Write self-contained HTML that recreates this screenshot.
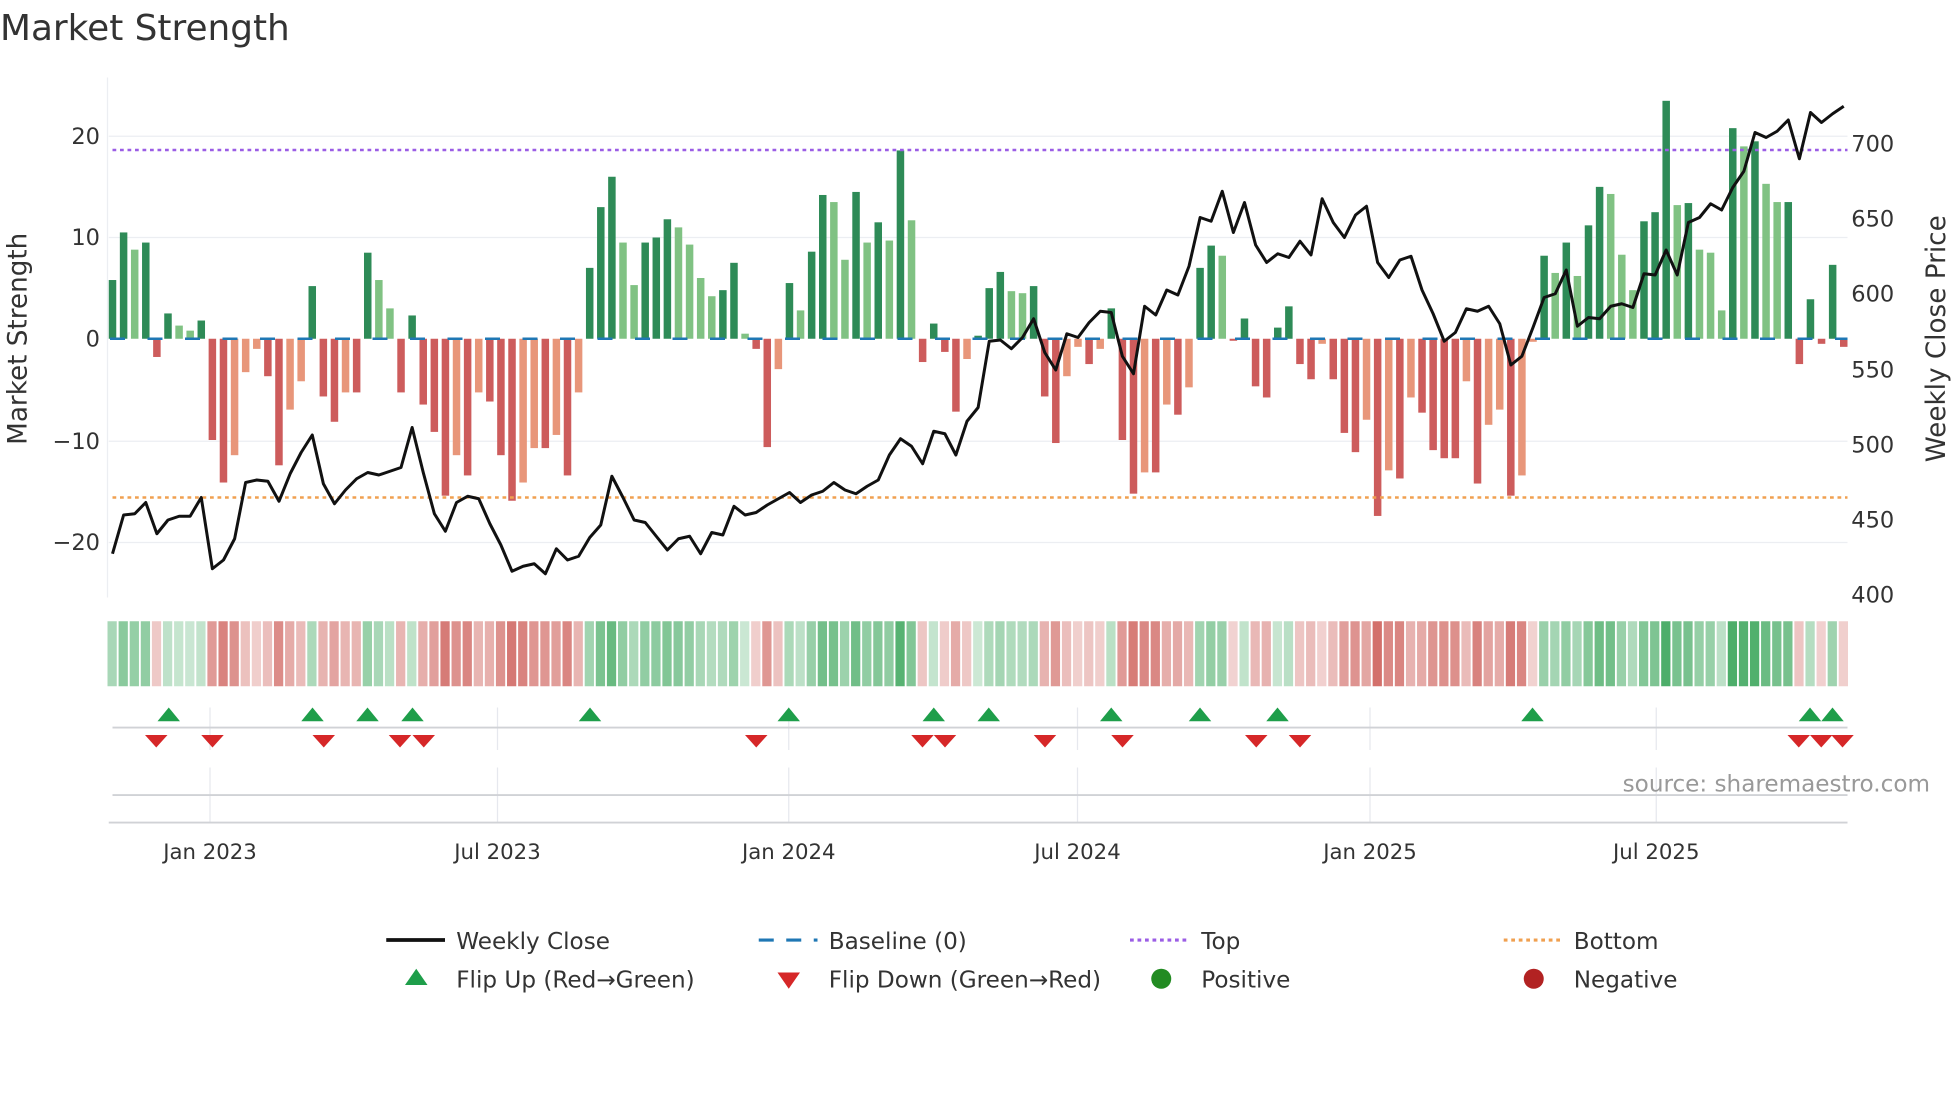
<!DOCTYPE html>
<html><head><meta charset="utf-8"><style>
html,body{margin:0;padding:0;background:#fff;width:1960px;height:1102px;overflow:hidden}
svg{display:block}
text{font-family:"DejaVu Sans","Liberation Sans",sans-serif;fill:#333}
</style></head><body>
<svg id="s" width="1960" height="1102" viewBox="0 0 1568 881.6" xmlns="http://www.w3.org/2000/svg">
<rect width="1568" height="882" fill="#fff"/>
<text x="0" y="32" font-size="28.7">Market Strength</text>
<g id="grid"></g>
<g id="bars"></g>
<g id="heat"></g>
<g id="marks"></g>
<g id="axes"></g>
</svg>
<script>
const NS="http://www.w3.org/2000/svg";
function el(p,t,a,txt){const e=document.createElementNS(NS,t);for(const k in a)e.setAttribute(k,a[k]);if(txt!==undefined)e.textContent=txt;document.getElementById(p).appendChild(e);return e;}
const v=[5.8,10.5,8.8,9.5,-1.8,2.5,1.3,0.8,1.8,-10,-14.2,-11.5,-3.3,-1,-3.7,-12.5,-7,-4.2,5.2,-5.7,-8.2,-5.3,-5.3,8.5,5.8,3,-5.3,2.3,-6.5,-9.2,-15.5,-11.5,-13.5,-5.3,-6.2,-11.5,-16,-14.2,-10.8,-10.8,-9.5,-13.5,-5.3,7,13,16,9.5,5.3,9.5,10,11.8,11,9.3,6,4.2,4.8,7.5,0.5,-1,-10.7,-3,5.5,2.8,8.6,14.2,13.5,7.8,14.5,9.5,11.5,9.7,18.6,11.7,-2.3,1.5,-1.3,-7.2,-2,0.3,5,6.6,4.7,4.5,5.2,-5.7,-10.3,-3.7,-0.8,-2.5,-1,3,-10,-15.3,-13.2,-13.2,-6.5,-7.5,-4.8,7,9.2,8.2,-0.2,2,-4.7,-5.8,1.1,3.2,-2.5,-4,-0.5,-4,-9.3,-11.2,-8,-17.5,-13,-13.8,-5.8,-7.3,-11,-11.8,-11.8,-4.2,-14.3,-8.5,-7,-15.5,-13.5,-0.3,8.2,6.5,9.5,6.2,11.2,15,14.3,8.3,4.8,11.6,12.5,23.5,13.2,13.4,8.8,8.5,2.8,20.8,19,19.5,15.3,13.5,13.5,-2.5,3.9,-0.5,7.3,-0.8];
const py=[443,412,411,402,427,416,413,413,398,455,448,431,386,384,385,401,379,362,348,387,403,392,383,378,380,377,374,342,378,411,425,402,397,399,419,436,457,453,451,459,439,448,445,430,420,381,398,416,418,429,440,431,429,443,426,428,405,412,410,404,399,394,402,396,393,386,392,395,389,384,364,351,357,371,345,347,364,337,326,273,272,279,270,255,282,296,267,270,258,249,250,285,299,245,252,232,236,213,174,177,153,186,162,196,210,203,206,193,204,159,178,190,172,165,210,222,208,205,232,251,273,266,247,249,245,259,292,285,262,238,235,216,261,254,255,245,243,246,219,220,200,220,178,174,163,168,150,137,106,110,105,96,127,90,98,91,85];
const N=v.length, x0=90, dx=(1475-90)/(N-1);
const Y=u=>271-u*8.1;
[[109],[190],[353],[434]].forEach(a=>el('grid','line',{x1:87,x2:1478,y1:a[0],y2:a[0],stroke:'#eceef2','stroke-width':1}));
el('grid','line',{x1:86,x2:86,y1:62,y2:478,stroke:'#eceef2'});
[168,398,631,862,1096,1325].forEach(x=>{el('grid','line',{x1:x,x2:x,y1:566,y2:600,stroke:'#e6e8ee'});el('grid','line',{x1:x,x2:x,y1:614,y2:658,stroke:'#e6e8ee'});});
for(let i=0;i<N;i++){const x=x0+i*dx,val=v[i];const p=i>0?v[i-1]:0;const same=p*val>0;const light=same&&Math.abs(val)<Math.abs(p);
let c=val>=0?(light?'#80c283':'#2e8b57'):(light?'#e8967a':'#cd5c5c');
el('bars','rect',{x:x-3,y:val>=0?Y(val):271,width:6,height:Math.abs(val)*8.1,fill:c});}
el('bars','line',{x1:88,x2:1478,y1:271,y2:271,stroke:'#1f77b4','stroke-width':2,'stroke-dasharray':'12,18'});
el('bars','line',{x1:90,x2:1478,y1:120,y2:120,stroke:'#9b5de5','stroke-width':2,'stroke-dasharray':'3,3'});
el('bars','line',{x1:90,x2:1478,y1:398,y2:398,stroke:'#f0a050','stroke-width':2,'stroke-dasharray':'3,3'});
let d='';for(let i=0;i<N;i++)d+=(i?'L':'M')+(x0+i*dx).toFixed(1)+','+py[i];
el('bars','path',{d:d,fill:'none',stroke:'#111','stroke-width':2.4,'stroke-linejoin':'round'});
for(let i=0;i<N;i++){const x=x0+i*dx,val=v[i];const a=0.25+0.65*Math.min(Math.abs(val)/20,1);
el('heat','rect',{x:x-4,y:497,width:7.4,height:52,fill:val>=0?'#3aa55a':'#c9504a','fill-opacity':a});}
el('marks','line',{x1:90,x2:1478,y1:582,y2:582,stroke:'#d0d2d6','stroke-width':1.5});
el('marks','line',{x1:90,x2:1478,y1:636,y2:636,stroke:'#d0d2d6','stroke-width':1.5});
el('marks','line',{x1:87,x2:1478,y1:658,y2:658,stroke:'#d0d2d6','stroke-width':1.5});
[135,250,294,330,472,631,747,791,889,960,1022,1226,1448,1466].forEach(x=>el('marks','path',{d:`M${x-9},577L${x},566L${x+9},577Z`,fill:'#1e9e4a'}));
[125,170,259,320,339,605,738,756,836,898,1005,1040,1439,1457,1474].forEach(x=>el('marks','path',{d:`M${x-9},588L${x},598L${x+9},588Z`,fill:'#d62728'}));
[['20',115],['10',196],['0',277],['−10',359],['−20',440]].forEach(a=>el('axes','text',{x:80,y:a[1],'font-size':18,'text-anchor':'end'},a[0]));
[['700',121],['650',181],['600',241],['550',302],['500',362],['450',422],['400',482]].forEach(a=>el('axes','text',{x:1481,y:a[1],'font-size':18},a[0]));
el('axes','text',{x:0,y:0,'font-size':21,'text-anchor':'middle',transform:'translate(21,271) rotate(-90)'},'Market Strength');
el('axes','text',{x:0,y:0,'font-size':21,'text-anchor':'middle',transform:'translate(1556,271) rotate(-90)'},'Weekly Close Price');
[['Jan 2023',168],['Jul 2023',398],['Jan 2024',631],['Jul 2024',862],['Jan 2025',1096],['Jul 2025',1325]].forEach(a=>{el('axes','text',{x:a[1],y:687,'font-size':17,'text-anchor':'middle'},a[0]);});
el('axes','text',{x:1544,y:633,'font-size':18.5,'text-anchor':'end',style:'fill:#999'},'source: sharemaestro.com');
const LF=18.5;
el('axes','line',{x1:309,x2:356,y1:752,y2:752,stroke:'#111','stroke-width':3});
el('axes','text',{x:365,y:759,'font-size':LF},'Weekly Close');
el('axes','line',{x1:607,x2:654,y1:752,y2:752,stroke:'#1f77b4','stroke-width':2.5,'stroke-dasharray':'12,10'});
el('axes','text',{x:663,y:759,'font-size':LF},'Baseline (0)');
el('axes','line',{x1:904,x2:950,y1:752,y2:752,stroke:'#9b5de5','stroke-width':2.5,'stroke-dasharray':'3,3'});
el('axes','text',{x:961,y:759,'font-size':LF},'Top');
el('axes','line',{x1:1203,x2:1249,y1:752,y2:752,stroke:'#f0a050','stroke-width':2.5,'stroke-dasharray':'3,3'});
el('axes','text',{x:1259,y:759,'font-size':LF},'Bottom');
el('axes','path',{d:'M324,788L333,775L342,788Z',fill:'#1e9e4a'});
el('axes','text',{x:365,y:790,'font-size':LF},'Flip Up (Red→Green)');
el('axes','path',{d:'M622,778L631,791L640,778Z',fill:'#d62728'});
el('axes','text',{x:663,y:790,'font-size':LF},'Flip Down (Green→Red)');
el('axes','circle',{cx:929,cy:783,r:8,fill:'#228b22'});
el('axes','text',{x:961,y:790,'font-size':LF},'Positive');
el('axes','circle',{cx:1227,cy:783,r:8,fill:'#b22222'});
el('axes','text',{x:1259,y:790,'font-size':LF},'Negative');
</script>
</body></html>
